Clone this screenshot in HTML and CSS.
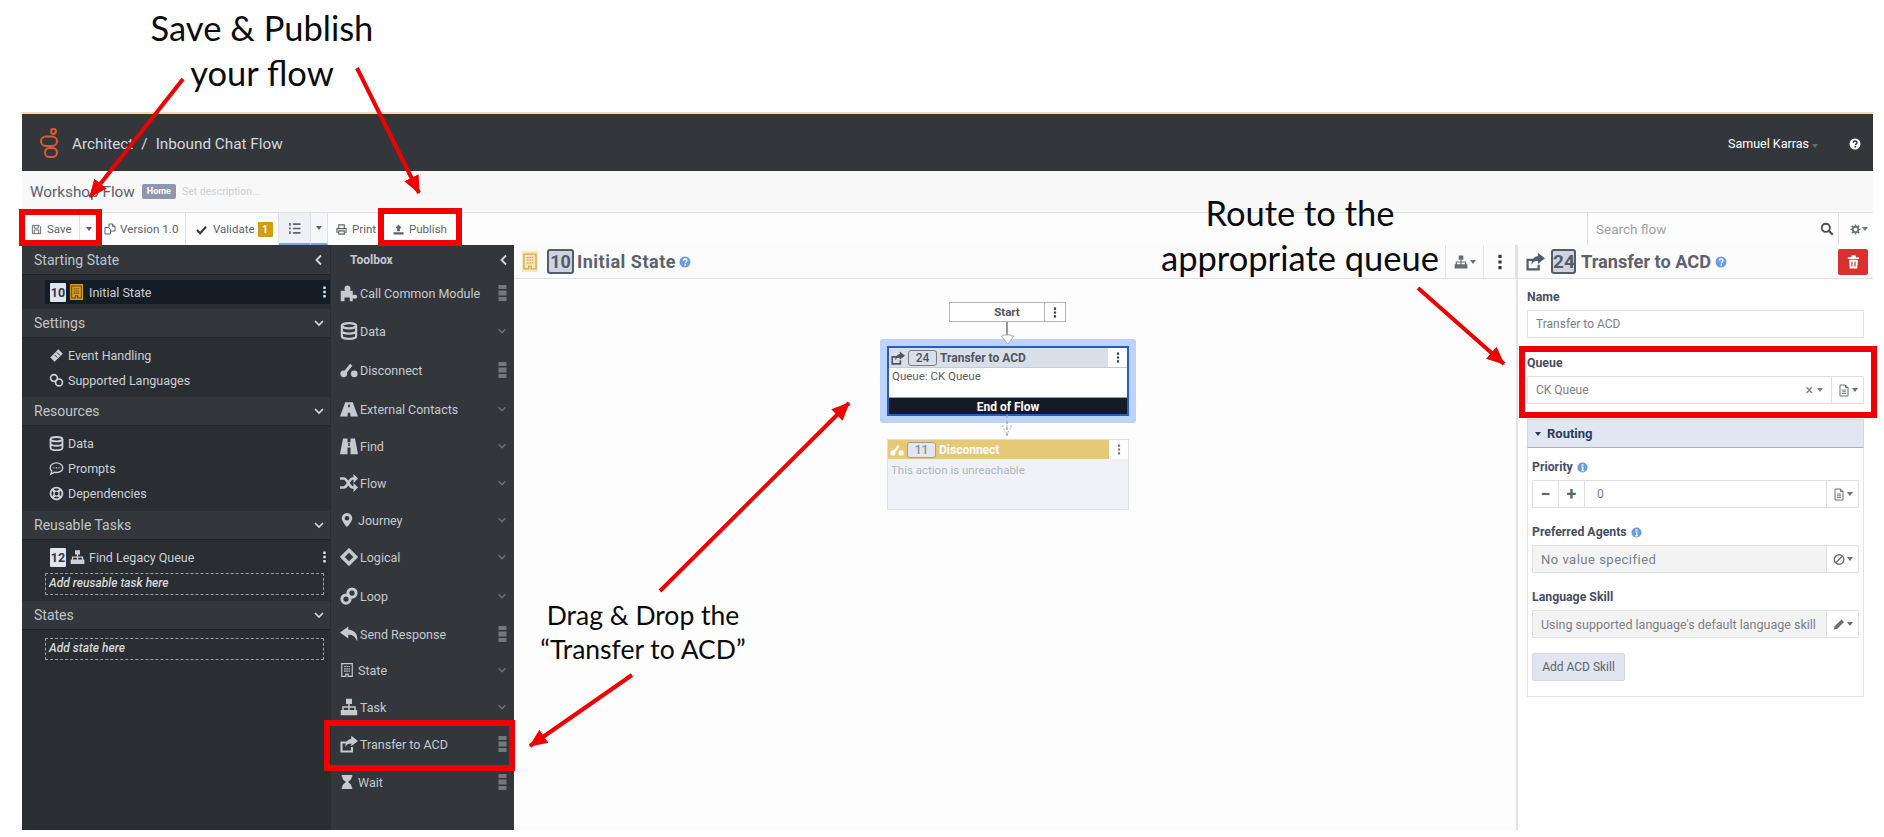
FILE: index.html
```html
<!DOCTYPE html>
<html lang="en">
<head>
    <meta charset="UTF-8">
    <meta name="viewport" content="width=device-width, initial-scale=1.0">
    <title>Architect - Inbound Chat Flow</title>
    <link rel="stylesheet" href="styles.css">
</head>
<body>

<svg class="defs" width="0" height="0">
    <defs>
        <symbol id="i-save" viewBox="0 0 24 24"><path d="M3 3h15l3 3v15H3z M7 3v6h9V3 M7 21v-8h10v8" fill="none" stroke="currentColor" stroke-width="2"/></symbol>
        <symbol id="i-copy" viewBox="0 0 24 24"><path d="M2 9h7l4 4v9H2z M10 9V2h7l5 5v9h-9 M17 2v5h5" fill="none" stroke="currentColor" stroke-width="2"/></symbol>
        <symbol id="i-check" viewBox="0 0 24 24"><path d="M2 13l7 7L22 6" fill="none" stroke="currentColor" stroke-width="4.5"/></symbol>
        <symbol id="i-list" viewBox="0 0 24 24"><path d="M9 4h14M9 12h14M9 20h14" fill="none" stroke="currentColor" stroke-width="3.2"/><path d="M2 2h3v5H2zM2 10h3v4H2zM2 17h3v5H2z" fill="currentColor"/></symbol>
        <symbol id="i-print" viewBox="0 0 24 24"><path d="M6 9V2h12v7 M6 18H2v-8h20v8h-4 M6 15h12v7H6z" fill="none" stroke="currentColor" stroke-width="2.4"/></symbol>
        <symbol id="i-upload" viewBox="0 0 24 24"><path d="M12 1l7 8h-4v7H9V9H5z M1 18h22v5H1z" fill="currentColor"/></symbol>
        <symbol id="i-search" viewBox="0 0 24 24"><circle cx="10" cy="10" r="7" fill="none" stroke="currentColor" stroke-width="3.2"/><path d="M15 15l7 7" stroke="currentColor" stroke-width="3.6"/></symbol>
        <symbol id="i-gear" viewBox="0 0 24 24"><circle cx="12" cy="12" r="6" fill="none" stroke="currentColor" stroke-width="4"/><path d="M12 1v5M12 18v5M1 12h5M18 12h5M4 4l4 4M16 16l4 4M20 4l-4 4M8 16l-4 4" stroke="currentColor" stroke-width="3.4"/></symbol>
        <symbol id="i-building" viewBox="0 0 24 24"><path d="M3 1h18v22h-7v-4h-4v4H3z" fill="none" stroke="currentColor" stroke-width="2"/><path d="M7 5h3v2H7zM11 5h3v2h-3zM15 5h2v2h-2zM7 9h3v2H7zM11 9h3v2h-3zM15 9h2v2h-2zM7 13h3v2H7zM11 13h3v2h-3zM15 13h2v2h-2z" fill="currentColor"/></symbol>
        <symbol id="i-puzzle" viewBox="0 0 24 24"><path d="M1 23V9h6c-2-2-1-7 3-7s5 5 3 7h4v6c2-1 6-1 6 2s-4 3-6 2v4h-4v-5H6v5z" fill="currentColor"/></symbol>
        <symbol id="i-data" viewBox="0 0 24 24"><ellipse cx="12" cy="5" rx="9.500" ry="3.500" fill="none" stroke="currentColor" stroke-width="3"/><path d="M2.500 5v14c0 2 4 3.500 9.500 3.500s9.500-1.500 9.500-3.500V5 M2.500 12c0 2 4 3.500 9.500 3.500s9.500-1.500 9.500-3.500" fill="none" stroke="currentColor" stroke-width="3"/></symbol>
        <symbol id="i-disconnect" viewBox="0 0 24 24"><circle cx="5" cy="17" r="4.500" fill="currentColor"/><circle cx="19" cy="17" r="4.500" fill="currentColor"/><path d="M6 16L15 5" stroke="currentColor" stroke-width="4"/></symbol>
        <symbol id="i-road" viewBox="0 0 24 24"><path d="M7 3h10l7 19H14l-.5-5h-3L10 22H0z" fill="currentColor"/><path d="M11 6h2l.3 3.500h-2.600z" fill="#33373c"/></symbol>
        <symbol id="i-find" viewBox="0 0 24 24"><path d="M4 2h6v5h4V2h6l4 21H14v-9h-4v9H0z" fill="currentColor"/><path d="M11 8h2v4h-2z" fill="#33373c"/></symbol>
        <symbol id="i-random" viewBox="0 0 24 24"><path d="M0 6h5c5 0 7 12 12 12h3 M0 18h5c5 0 7-12 12-12h3" fill="none" stroke="currentColor" stroke-width="3.600"/><path d="M18 0l6 6-6 6zM18 12l6 6-6 6z" fill="currentColor"/></symbol>
        <symbol id="i-marker" viewBox="0 0 24 24"><path fill-rule="evenodd" d="M12 0a9 9 0 0 1 9 9c0 6-9 15-9 15S3 15 3 9a9 9 0 0 1 9-9zm0 5a4 4 0 1 0 0 8 4 4 0 0 0 0-8z" fill="currentColor"/></symbol>
        <symbol id="i-diamond" viewBox="0 0 24 24"><path d="M12 3l9 9-9 9-9-9z" fill="none" stroke="currentColor" stroke-width="4.500"/></symbol>
        <symbol id="i-link" viewBox="0 0 24 24"><circle cx="8" cy="16" r="5.500" fill="none" stroke="currentColor" stroke-width="4"/><circle cx="16" cy="8" r="5.500" fill="none" stroke="currentColor" stroke-width="4"/></symbol>
        <symbol id="i-reply" viewBox="0 0 24 24"><path d="M11 2L0 10l11 8v-5c6 0 9 2 12 9 1-10-3-15-12-16z" fill="currentColor"/></symbol>
        <symbol id="i-sitemap" viewBox="0 0 24 24"><path d="M8 1h8v7h-3v3h8v5h2v7h-7v-7h3v-3h-6v3h3v7H8v-7h3v-3H5v3h3v7H1v-7h2v-5h8V8H8z" fill="currentColor"/></symbol>
        <symbol id="i-share" viewBox="0 0 24 24"><path d="M15 10H2v12h14v-6" fill="none" stroke="currentColor" stroke-width="2.800"/><path d="M15 1l9 7-9 7v-4c-3 0-6 1-8 5 0-6 3-10 8-11z" fill="currentColor"/></symbol>
        <symbol id="i-hourglass" viewBox="0 0 24 24"><path d="M3 0h18v3h-1c0 6-5 7-6 9 1 2 6 3 6 9h1v3H3v-3h1c0-6 5-7 6-9-1-2-6-3-6-9H3z" fill="currentColor"/></symbol>
        <symbol id="i-ticket" viewBox="0 0 24 24"><path d="M15 2l7 7-13 13-7-7z" fill="currentColor"/><path d="M12.500 7l5 5M9 11l4 4" stroke="#2a2e33" stroke-width="1.500"/></symbol>
        <symbol id="i-language" viewBox="0 0 24 24"><circle cx="8" cy="8" r="5.500" fill="none" stroke="currentColor" stroke-width="2.600"/><circle cx="16" cy="15" r="5.500" fill="none" stroke="currentColor" stroke-width="2.600"/></symbol>
        <symbol id="i-comment" viewBox="0 0 24 24"><path d="M12 3C6 3 2 6.500 2 11c0 2 1 4 2.500 5L3 21l6-3c1 .2 2 .3 3 .3 6 0 10-3.300 10-7.300S18 3 12 3z" fill="none" stroke="currentColor" stroke-width="2.200"/><path d="M7 10h2v2H7zM11 10h2v2h-2zM15 10h2v2h-2z" fill="currentColor"/></symbol>
        <symbol id="i-lifering" viewBox="0 0 24 24"><circle cx="12" cy="12" r="9.500" fill="none" stroke="currentColor" stroke-width="3"/><circle cx="12" cy="12" r="4" fill="none" stroke="currentColor" stroke-width="2"/><path d="M5 5l4 4M19 5l-4 4M5 19l4-4M19 19l-4-4" stroke="currentColor" stroke-width="4"/></symbol>
        <symbol id="i-trash" viewBox="0 0 24 24"><path d="M9 2h6l1 3h5v3H3V5h5zM5 9h14l-1 14H6z" fill="currentColor"/><path d="M9.500 12v8M14.500 12v8" stroke="#d9312f" stroke-width="1.800"/></symbol>
        <symbol id="i-file" viewBox="0 0 24 24"><path d="M4 1h11l5 5v17H4z M15 1v5h5" fill="none" stroke="currentColor" stroke-width="2"/><path d="M8 11h8M8 14.500h8M8 18h8" stroke="currentColor" stroke-width="1.800"/></symbol>
        <symbol id="i-ban" viewBox="0 0 24 24"><circle cx="12" cy="12" r="9.500" fill="none" stroke="currentColor" stroke-width="2.800"/><path d="M5 19L19 5" stroke="currentColor" stroke-width="2.800"/></symbol>
        <symbol id="i-pencil" viewBox="0 0 24 24"><path d="M17 2l5 5L8 21l-6 1 1-6z" fill="currentColor"/></symbol>
        <symbol id="i-info" viewBox="0 0 24 24"><circle cx="12" cy="12" r="11" fill="currentColor"/><path d="M10 5h4v3h-4zM9.500 10H14v8h1.500v2h-6v-2H11v-6H9.500z" fill="#fff"/></symbol>
        <symbol id="i-help" viewBox="0 0 24 24"><circle cx="12" cy="12" r="11" fill="currentColor"/><path d="M8.500 9.500C8.500 7.500 10 6 12 6s3.800 1.300 3.800 3.300c0 2.700-3 2.700-3 5" fill="none" stroke="var(--help-mark, #fff)" stroke-width="2.800"/><path d="M11 16h3v3h-3z" fill="var(--help-mark, #fff)"/></symbol>
        <symbol id="i-down" viewBox="0 0 24 24"><path d="M4 8l8 8 8-8" fill="none" stroke="currentColor" stroke-width="3.400"/></symbol>
        <symbol id="i-left" viewBox="0 0 24 24"><path d="M16 3l-9 9 9 9" fill="none" stroke="currentColor" stroke-width="3.600"/></symbol>
        <symbol id="i-grip" viewBox="0 0 10 20"><path d="M0 0h10v5H0zM0 7h10v6H0zM0 15h10v5H0z" fill="currentColor"/></symbol>
        <symbol id="i-kebab" viewBox="0 0 6 20"><path d="M1 1h4v4H1zM1 8h4v4H1zM1 15h4v4H1z" fill="currentColor"/></symbol>
    </defs>
</svg>

<div class="page">

    <div class="app">
        <header class="app-header">
            <svg class="logo" viewBox="0 0 18 30">
                <circle cx="13.500" cy="3.500" r="2.400"/>
                <rect x="1" y="8.500" width="16" height="9.500" rx="4.700"/>
                <rect x="5" y="20" width="12" height="9" rx="4.500"/>
            </svg>
            <span class="crumb">Architect</span>
            <span class="crumb crumb-sep">/</span>
            <span class="crumb">Inbound Chat Flow</span>
            <span class="user">Samuel Karras<i class="caret caret-dim"></i></span>
            <svg class="help-top"><use href="#i-help"/></svg>
        </header>

        <div class="flow-title">
            <span class="flow-name">Workshop Flow</span>
            <span class="home-badge">Home</span>
            <span class="flow-desc">Set description...</span>
        </div>

        <div class="toolbar">
            <div class="tb tb-save"><svg class="ic"><use href="#i-save"/></svg>Save</div>
            <div class="tb tb-caret"><i class="caret"></i></div>
            <div class="tb tb-version"><svg class="ic ic-copy"><use href="#i-copy"/></svg>Version 1.0</div>
            <div class="tb tb-validate"><svg class="ic ic-check"><use href="#i-check"/></svg>Validate<span class="count">1</span></div>
            <div class="tb tb-list"><svg class="ic"><use href="#i-list"/></svg></div>
            <div class="tb tb-caret tb-list-caret"><i class="caret"></i></div>
            <div class="tb tb-print"><svg class="ic"><use href="#i-print"/></svg>Print</div>
            <div class="tb tb-publish"><svg class="ic"><use href="#i-upload"/></svg>Publish</div>
            <div class="tb-search">
                <span>Search flow</span>
                <svg class="ic-search"><use href="#i-search"/></svg>
            </div>
            <div class="tb-gear"><svg class="ic"><use href="#i-gear"/></svg><i class="caret"></i></div>
        </div>

        <div class="workspace">
            <aside class="outline">
                <div class="sec-head sec-first">Starting State<svg class="chev"><use href="#i-left"/></svg></div>
                <div class="sec-body body-start">
                    <div class="task selected">
                        <span class="num">10</span>
                        <svg class="task-ic task-amber"><use href="#i-building"/></svg>
                        <span>Initial State</span>
                        <svg class="kebab"><use href="#i-kebab"/></svg>
                    </div>
                </div>

                <div class="sec-head">Settings<svg class="chev"><use href="#i-down"/></svg></div>
                <div class="sec-body body-settings">
                    <div class="link"><svg class="link-ic"><use href="#i-ticket"/></svg>Event Handling</div>
                    <div class="link"><svg class="link-ic"><use href="#i-language"/></svg>Supported Languages</div>
                </div>

                <div class="sec-head">Resources<svg class="chev"><use href="#i-down"/></svg></div>
                <div class="sec-body body-resources">
                    <div class="link"><svg class="link-ic"><use href="#i-data"/></svg>Data</div>
                    <div class="link"><svg class="link-ic"><use href="#i-comment"/></svg>Prompts</div>
                    <div class="link"><svg class="link-ic"><use href="#i-lifering"/></svg>Dependencies</div>
                </div>

                <div class="sec-head">Reusable Tasks<svg class="chev"><use href="#i-down"/></svg></div>
                <div class="sec-body body-tasks">
                    <div class="task">
                        <span class="num">12</span>
                        <svg class="task-ic"><use href="#i-sitemap"/></svg>
                        <span>Find Legacy Queue</span>
                        <svg class="kebab"><use href="#i-kebab"/></svg>
                    </div>
                    <div class="drop">Add reusable task here</div>
                </div>

                <div class="sec-head">States<svg class="chev"><use href="#i-down"/></svg></div>
                <div class="sec-body body-states">
                    <div class="drop">Add state here</div>
                </div>
            </aside>

            <aside class="toolbox">
                <div class="toolbox-head">Toolbox<svg class="chev"><use href="#i-left"/></svg></div>
                <div class="tool"><svg class="tool-ic"><use href="#i-puzzle"/></svg>Call Common Module<svg class="grip"><use href="#i-grip"/></svg></div>
                <div class="tool"><svg class="tool-ic"><use href="#i-data"/></svg>Data<svg class="more"><use href="#i-down"/></svg></div>
                <div class="tool tool-l"><svg class="tool-ic"><use href="#i-disconnect"/></svg>Disconnect<svg class="grip"><use href="#i-grip"/></svg></div>
                <div class="tool"><svg class="tool-ic"><use href="#i-road"/></svg>External Contacts<svg class="more"><use href="#i-down"/></svg></div>
                <div class="tool tool-s"><svg class="tool-ic"><use href="#i-find"/></svg>Find<svg class="more"><use href="#i-down"/></svg></div>
                <div class="tool"><svg class="tool-ic"><use href="#i-random"/></svg>Flow<svg class="more"><use href="#i-down"/></svg></div>
                <div class="tool tool-s"><svg class="tool-ic ic-narrow"><use href="#i-marker"/></svg>Journey<svg class="more"><use href="#i-down"/></svg></div>
                <div class="tool"><svg class="tool-ic"><use href="#i-diamond"/></svg>Logical<svg class="more"><use href="#i-down"/></svg></div>
                <div class="tool tool-l"><svg class="tool-ic"><use href="#i-link"/></svg>Loop<svg class="more"><use href="#i-down"/></svg></div>
                <div class="tool tool-s"><svg class="tool-ic"><use href="#i-reply"/></svg>Send Response<svg class="grip"><use href="#i-grip"/></svg></div>
                <div class="tool tool-s"><svg class="tool-ic ic-narrow"><use href="#i-building"/></svg>State<svg class="more"><use href="#i-down"/></svg></div>
                <div class="tool"><svg class="tool-ic"><use href="#i-sitemap"/></svg>Task<svg class="more"><use href="#i-down"/></svg></div>
                <div class="tool tool-s"><svg class="tool-ic"><use href="#i-share"/></svg>Transfer to ACD<svg class="grip"><use href="#i-grip"/></svg></div>
                <div class="tool tool-l"><svg class="tool-ic ic-narrow"><use href="#i-hourglass"/></svg>Wait<svg class="grip"><use href="#i-grip"/></svg></div>
            </aside>

            <main class="canvas">
                <div class="panel-head canvas-head">
                    <svg class="head-ic head-amber"><use href="#i-building"/></svg>
                    <span class="head-num">10</span>
                    <span class="head-title">Initial State</span>
                    <svg class="head-help"><use href="#i-help"/></svg>
                    <div class="canvas-tools">
                        <div class="canvas-tool tool-org"><svg><use href="#i-sitemap"/></svg><i class="caret"></i></div>
                        <div class="canvas-tool tool-menu"><svg class="canvas-kebab"><use href="#i-kebab"/></svg></div>
                    </div>
                </div>

                <div class="diagram">
                    <div class="node-start">
                        <span class="start-label">Start</span>
                        <span class="start-menu"><svg><use href="#i-kebab"/></svg></span>
                    </div>

                    <div class="node-glow">
                        <div class="node node-active">
                            <div class="node-title">
                                <svg class="node-ic"><use href="#i-share"/></svg>
                                <span class="node-num">24</span>
                                <span class="node-name">Transfer to ACD</span>
                                <span class="node-menu"><svg><use href="#i-kebab"/></svg></span>
                            </div>
                            <div class="node-body">Queue: CK Queue</div>
                            <div class="node-foot">End of Flow</div>
                        </div>
                    </div>

                    <div class="node node-off">
                        <div class="node-title">
                            <svg class="node-ic"><use href="#i-disconnect"/></svg>
                            <span class="node-num">11</span>
                            <span class="node-name">Disconnect</span>
                            <span class="node-menu"><svg><use href="#i-kebab"/></svg></span>
                        </div>
                        <div class="node-body">This action is unreachable</div>
                    </div>

                    <svg class="wires" viewBox="0 0 1002 550">
                        <path d="M493 43v13" stroke="#777" stroke-width="1.500"/>
                        <path d="M489 56h8v1h3l-6 8h-0.500l-6-8h1z" fill="#fff" stroke="#aaa"/>
                        <path d="M493 136v24" stroke="#aaa" stroke-width="1.500" stroke-dasharray="3 3" fill="none"/>
                        <path d="M488 147h10l-5 8z" fill="none" stroke="#bbb" stroke-dasharray="2 2"/>
                    </svg>
                </div>
            </main>

            <aside class="props">
                <div class="panel-head props-head">
                    <svg class="head-ic"><use href="#i-share"/></svg>
                    <span class="head-num">24</span>
                    <span class="head-title">Transfer to ACD</span>
                    <svg class="head-help"><use href="#i-help"/></svg>
                    <div class="del-btn"><svg><use href="#i-trash"/></svg></div>
                </div>

                <div class="props-form">
                    <label class="lbl lbl-first">Name</label>
                    <div class="input"><span class="input-text">Transfer to ACD</span></div>

                    <label class="lbl">Queue</label>
                    <div class="input">
                        <span class="input-text">CK Queue</span>
                        <span class="clear">×</span><i class="caret caret-clear"></i>
                        <span class="addon"><svg><use href="#i-file"/></svg><i class="caret"></i></span>
                    </div>

                    <div class="routing-head"><i class="caret"></i>Routing</div>
                    <div class="routing-body">
                        <label class="lbl lbl-first">Priority<svg class="info"><use href="#i-info"/></svg></label>
                        <div class="input">
                            <span class="step">&minus;</span>
                            <span class="step">+</span>
                            <span class="input-text">0</span>
                            <span class="addon"><svg><use href="#i-file"/></svg><i class="caret"></i></span>
                        </div>

                        <label class="lbl">Preferred Agents<svg class="info"><use href="#i-info"/></svg></label>
                        <div class="input input-off">
                            <span class="input-text input-none">No value specified</span>
                            <span class="addon"><svg><use href="#i-ban"/></svg><i class="caret"></i></span>
                        </div>

                        <label class="lbl">Language Skill</label>
                        <div class="input input-off">
                            <span class="input-text input-skill">Using supported language's default language skill</span>
                            <span class="addon"><svg><use href="#i-pencil"/></svg><i class="caret"></i></span>
                        </div>

                        <button class="add-skill">Add ACD Skill</button>
                    </div>
                </div>
            </aside>
        </div>
    </div>

    <!-- slide annotations drawn over the screenshot -->
    <div class="note note-save">Save &amp; Publish<br>your flow</div>
    <div class="note note-route">Route to the<br>appropriate queue</div>
    <div class="note note-drag">Drag &amp; Drop the<br>&ldquo;Transfer to ACD&rdquo;</div>

    <div class="mark mark-save"></div>
    <div class="mark mark-publish"></div>
    <div class="mark mark-queue"></div>
    <div class="mark mark-tool"></div>

    <svg class="arrows" viewBox="0 0 1884 837">
        <defs>
            <marker id="head" markerUnits="userSpaceOnUse" markerWidth="18" markerHeight="16" refX="17" refY="8" orient="auto-start-reverse">
                <path d="M0 0L18 8L0 16z" fill="#f00000"/>
            </marker>
        </defs>
        <line x1="183" y1="79" x2="90" y2="197" marker-end="url(#head)"/>
        <line x1="357" y1="68" x2="419" y2="193" marker-end="url(#head)"/>
        <line x1="1418" y1="288" x2="1504" y2="364" marker-end="url(#head)"/>
        <line x1="660" y1="591" x2="849" y2="403" marker-end="url(#head)"/>
        <line x1="632" y1="675" x2="530" y2="746" marker-end="url(#head)"/>
    </svg>
</div>

</body>
</html>
```

FILE: styles.css
```css
body {
    margin: 0;
    background: white;
    font-family: Roboto, Arial, sans-serif;
    font-size: 12px;
    color: #555c66;
}

.defs {
    position: absolute;
}

.page {
    position: relative;
    width: 1884px;
    height: 837px;
    padding-top: 112px;
    box-sizing: border-box;
    overflow: hidden;
}

.app {
    display: flex;
    flex-direction: column;
    width: 1851px;
    height: 716px;
    margin-left: 22px;
    border-top: 2px solid #f6d9a9;
}

.caret {
    display: inline-block;
    width: 0;
    height: 0;
    border-left: 3.5px solid transparent;
    border-right: 3.5px solid transparent;
    border-top: 4px solid currentColor;
}

.caret-dim {
    color: #666b71;
    margin-left: 3px;
}

/* header */
.app-header {
    display: flex;
    align-items: center;
    height: 57px;
    flex-shrink: 0;
    background: #33373c;
    color: #d5d8dc;
}

.logo {
    width: 18px;
    height: 30px;
    margin: 0 14px 0 18px;
    fill: none;
    stroke: #df5a32;
    stroke-width: 2;
}

.crumb {
    padding-top: 2px;
    font-size: 15.3px;
}

.crumb-sep {
    margin: 0 8px;
}

.user {
    margin-left: auto;
    padding-top: 2px;
    color: white;
    font-size: 12.5px;
}

.help-top {
    width: 12px;
    height: 12px;
    margin: 2px 12px 0 31px;
    color: white;
    --help-mark: #33373c;
}

/* title row */
.flow-title {
    display: flex;
    align-items: center;
    height: 41px;
    flex-shrink: 0;
    padding-left: 8px;
    background: #f8f8f9;
    box-sizing: border-box;
}

.flow-name {
    font-size: 15.3px;
    color: #5b6270;
}

.home-badge {
    margin-left: 7px;
    padding: 1px 5px;
    border-radius: 2px;
    background: #8d97b0;
    color: white;
    font-size: 9px;
    font-weight: bold;
    line-height: 13px;
}

.flow-desc {
    margin-left: 6px;
    font-size: 10.5px;
    color: #ccd0d6;
}

/* toolbar */
.toolbar {
    display: flex;
    height: 33px;
    flex-shrink: 0;
    background: #fdfdfd;
    border-top: 1px solid #dfe1e4;
    box-sizing: border-box;
    font-size: 11.5px;
    color: #5d6470;
}

.tb {
    display: flex;
    align-items: center;
    box-sizing: border-box;
}

.ic {
    width: 11px;
    height: 11px;
    flex-shrink: 0;
    margin-right: 5px;
}

.tb-save {
    width: 57px;
    padding-left: 9px;
}

.tb-caret {
    justify-content: center;
    width: 18px;
    border-left: 1px solid #dfe1e4;
}

.tb-version {
    width: 89px;
    padding-left: 7px;
    border-right: 1px solid #dfe1e4;
    font-size: 11.7px;
}

.tb-version .ic-copy {
    width: 12px;
    height: 12px;
    margin-right: 4px;
}

.tb-validate {
    width: 93px;
    padding-left: 10px;
    border-right: 1px solid #dfe1e4;
}

.tb-validate .ic-check {
    margin-right: 6px;
    color: #33373c;
}

.count {
    display: inline-block;
    width: 15px;
    margin-left: 3px;
    border-radius: 1px;
    background: #d59c0f;
    color: white;
    font-size: 10px;
    font-weight: bold;
    line-height: 15px;
    text-align: center;
}

.tb-list {
    justify-content: center;
    width: 31px;
    background: #eef0f5;
    border-bottom: 2px solid #76a3ea;
}

.tb-list .ic {
    width: 13px;
    height: 13px;
    margin: 0;
}

.tb-list-caret {
    background: #f6f7f9;
    border-bottom: 2px solid #76a3ea;
    border-right: 1px solid #dfe1e4;
}

.tb-print {
    width: 50px;
    padding-left: 8px;
}

.tb-publish {
    width: 84px;
    padding-left: 15px;
}

.tb-search {
    display: flex;
    align-items: center;
    justify-content: space-between;
    width: 251px;
    margin-left: auto;
    padding: 0 4px 0 8px;
    border-left: 1px solid #dfe1e4;
    box-sizing: border-box;
    font-size: 13.5px;
    color: #9ea2a8;
}

.ic-search {
    width: 14px;
    height: 14px;
    color: #4a4f55;
}

.tb-gear {
    display: flex;
    align-items: center;
    width: 35px;
    padding-left: 11px;
    border-left: 1px solid #dfe1e4;
    box-sizing: border-box;
    color: #70757b;
}

.tb-gear .ic {
    margin-right: 1px;
}

.workspace {
    display: flex;
    flex: 1;
    min-height: 0;
}

/* left outline */
.outline {
    width: 308px;
    flex-shrink: 0;
    background: #2a2e33;
    color: #ccd0d5;
}

.sec-head {
    display: flex;
    align-items: center;
    justify-content: space-between;
    height: 29px;
    padding: 0 5px 0 12px;
    background: #33373c;
    border-bottom: 1px solid #212429;
    box-sizing: border-box;
    font-size: 14px;
    color: #bfc3c8;
}

.sec-first {
    height: 30px;
}

.chev {
    width: 12px;
    height: 12px;
    color: #d5d8dc;
}

.sec-body {
    box-sizing: border-box;
}

.body-start {
    padding: 5px 0 5px 23px;
}

.body-settings {
    padding: 5px 0 4px 27px;
}

.body-resources {
    padding: 5px 0 5px 27px;
}

.body-tasks {
    padding: 6px 6px 6px 23px;
}

.body-states {
    padding: 8px 6px 0 23px;
}

.link {
    display: flex;
    align-items: center;
    height: 25px;
    font-size: 12.5px;
}

.link-ic {
    width: 15px;
    height: 15px;
    margin-right: 4px;
}

.task {
    display: flex;
    align-items: center;
    height: 22px;
    margin-right: -6px;
    padding-left: 5px;
    font-size: 12.5px;
}

.body-start .task {
    height: 24px;
    margin-right: 0;
}

.task.selected {
    background: #141c26;
}

.num {
    width: 16px;
    height: 19px;
    margin-right: 4px;
    border-radius: 1px;
    background: #dfe4ee;
    color: #33373c;
    font-size: 12.5px;
    font-weight: bold;
    line-height: 19px;
    text-align: center;
}

.task-ic {
    width: 15px;
    height: 16px;
    margin-right: 4px;
}

.task-amber {
    width: 13px;
    margin-right: 6px;
    background: #d59c20;
    color: #6b4d10;
}

.kebab {
    width: 5px;
    height: 12px;
    margin-left: auto;
    margin-right: 3px;
    color: #e3e5e8;
}

.drop {
    height: 22px;
    margin-top: 5px;
    padding-left: 3px;
    border: 1px dashed #9a9ea3;
    box-sizing: border-box;
    font-size: 12px;
    font-style: italic;
    font-weight: 500;
    line-height: 19px;
    color: #d5d8dc;
}

.body-states .drop {
    margin-top: 0;
}

/* toolbox */
.toolbox {
    width: 184px;
    flex-shrink: 0;
    background: #33373c;
    border-left: 1px solid #2a2e33;
    box-sizing: border-box;
    color: #c6cace;
    font-size: 12.5px;
}

.toolbox-head {
    display: flex;
    align-items: center;
    justify-content: space-between;
    height: 29px;
    padding: 0 4px 0 19px;
    font-size: 12px;
    font-weight: bold;
    color: #c6cace;
}

.tool {
    display: flex;
    align-items: center;
    height: 38px;
    padding: 0 7px 0 9px;
}

.tool-s {
    height: 36px;
}

.tool-l {
    height: 40px;
}

.tool-ic {
    width: 18px;
    height: 18px;
    flex-shrink: 0;
    margin-right: 2px;
}

.ic-narrow {
    width: 14px;
    margin-right: 4px;
}

.grip {
    width: 9px;
    height: 16px;
    margin-left: auto;
    color: #74787d;
}

.more {
    width: 10px;
    height: 10px;
    margin-left: auto;
    color: #6d7177;
}

/* canvas and property panel heads */
.panel-head {
    display: flex;
    align-items: center;
    height: 34px;
    flex-shrink: 0;
    background: #fbfbfb;
    border-bottom: 1px solid #e1e3e6;
    box-sizing: border-box;
}

.head-ic {
    flex-shrink: 0;
}

.head-num {
    border: 2px solid #555c66;
    border-radius: 3px;
    background: #cdd3e0;
    box-sizing: border-box;
    font-weight: bold;
    text-align: center;
}

.head-title {
    font-weight: bold;
    color: #5b6270;
}

.head-help {
    width: 12px;
    height: 12px;
    color: #6b9be0;
}

.canvas {
    display: flex;
    flex-direction: column;
    flex: 1;
    min-width: 0;
    background: #fdfdfd;
}

.canvas-head {
    padding-left: 8px;
}

.canvas-head .head-ic {
    width: 16px;
    height: 21px;
    margin-right: 9px;
}

.head-amber {
    background: #f5e6c4;
    color: #d9a94a;
}

.canvas-head .head-num {
    width: 27px;
    height: 25px;
    margin-right: 3px;
    font-size: 18px;
    line-height: 21px;
}

.canvas-head .head-title {
    font-size: 18px;
    letter-spacing: 0.5px;
}

.canvas-head .head-help {
    margin-left: 3px;
}

.canvas-tools {
    display: flex;
    align-items: center;
    height: 100%;
    margin-left: auto;
}

.canvas-tool {
    display: flex;
    align-items: center;
    justify-content: center;
    height: 100%;
    border-left: 1px solid #e1e3e6;
    box-sizing: border-box;
}

.tool-org {
    width: 38px;
    gap: 2px;
    color: #696e75;
}

.tool-menu {
    width: 33px;
    border-right: 1px solid #e1e3e6;
}

.tool-org svg {
    width: 14px;
    height: 14px;
}

.canvas-kebab {
    width: 6px;
    height: 16px;
    color: #33373c;
}

/* diagram */
.diagram {
    position: relative;
    flex: 1;
}

.wires {
    position: absolute;
    left: 0;
    top: 0;
    width: 1002px;
    height: 550px;
    pointer-events: none;
}

.node-start {
    position: absolute;
    left: 435px;
    top: 23px;
    display: flex;
    width: 117px;
    height: 20px;
    border: 1px solid #b5b9bf;
    background: white;
    box-sizing: border-box;
    font-weight: bold;
    font-size: 11.5px;
    color: #4e5560;
    line-height: 18px;
}

.start-label {
    flex: 1;
    text-align: center;
    padding-left: 20px;
}

.start-menu {
    display: flex;
    align-items: center;
    justify-content: center;
    width: 20px;
    border-left: 1px solid #b5b9bf;
}

.start-menu svg,
.node-menu svg {
    width: 4px;
    height: 11px;
    color: #33373c;
}

.node-glow {
    position: absolute;
    left: 366px;
    top: 60px;
    width: 256px;
    height: 84px;
    padding: 7px;
    border-radius: 3px;
    background: #bcd3fb;
    box-sizing: border-box;
}

.node {
    width: 242px;
    box-sizing: border-box;
    font-size: 11.5px;
}

.node-title {
    display: flex;
    align-items: center;
    height: 19px;
    font-weight: bold;
    color: #4e5560;
    font-size: 12px;
}

.node-ic {
    width: 14px;
    height: 14px;
    margin: 0 3px 0 2px;
    flex-shrink: 0;
}

.node-num {
    width: 29px;
    height: 16px;
    margin-right: 3px;
    border: 1px solid #777c84;
    border-radius: 3px;
    box-sizing: border-box;
    font-weight: 500;
    line-height: 14px;
    text-align: center;
}

.node-menu {
    display: flex;
    align-items: center;
    justify-content: center;
    width: 19px;
    height: 100%;
    margin-left: auto;
    background: white;
}

.node-body {
    padding: 1px 3px 0;
    font-size: 11.5px;
}

.node-active {
    height: 70px;
    border: 2px solid #2a5cbb;
    background: white;
}

.node-active .node-title {
    background: #d9dfe8;
}

.node-active .node-body {
    height: 31px;
    box-sizing: border-box;
    border-top: 1px solid #c6ccd4;
    border-bottom: 1px solid #9aa0a8;
}

.node-foot {
    height: 16px;
    padding-top: 1px;
    background: #151b26;
    box-sizing: border-box;
    color: white;
    font-size: 12px;
    font-weight: bold;
    line-height: 16px;
    text-align: center;
}

.node-off {
    position: absolute;
    left: 373px;
    top: 160px;
    height: 71px;
    border: 1px solid #dcdfe5;
    background: #eff1f6;
    color: #b3b7bd;
}

.node-off .node-title {
    background: #e6c879;
    color: white;
}

.node-off .node-num {
    border-color: #9aa0a8;
    background: #e3e6ec;
    color: #8b9098;
}

.node-off .node-menu svg {
    color: #777;
}

.node-off .node-body {
    padding-top: 4px;
}

/* right panel */
.props {
    width: 357px;
    flex-shrink: 0;
    background: white;
    border-left: 2px solid #e1e3e6;
    box-sizing: border-box;
}

.props-head {
    padding-left: 8px;
}

.props-head .head-ic {
    width: 19px;
    height: 19px;
    margin-right: 6px;
}

.props-head .head-num {
    width: 25px;
    height: 25px;
    margin-right: 5px;
    font-size: 19px;
    line-height: 21px;
}

.props-head .head-title {
    font-size: 18.2px;
}

.props-head .head-help {
    margin-left: 4px;
}

.del-btn {
    display: flex;
    align-items: center;
    justify-content: center;
    width: 30px;
    height: 26px;
    margin: 0 5px 0 auto;
    border-radius: 2px;
    background: #d9312f;
    color: white;
}

.del-btn svg {
    width: 15px;
    height: 15px;
}

.props-form {
    padding: 0 9px;
}

.lbl {
    display: flex;
    align-items: center;
    height: 16px;
    margin: 17px 0 5px;
    font-size: 12.3px;
    font-weight: bold;
    color: #474e60;
}

.lbl-first {
    margin-top: 10px;
}

.routing-body .lbl {
    margin-top: 16px;
}

.routing-body .lbl-first {
    margin-top: 10px;
}

.input {
    display: flex;
    align-items: center;
    height: 28px;
    border: 1px solid #dfe1e4;
    border-radius: 1px;
    background: white;
    box-sizing: border-box;
    color: #7c8087;
}

.input-text {
    padding-left: 8px;
}

.input-none {
    font-size: 13px;
    letter-spacing: 0.5px;
}

.input-skill {
    font-size: 12.5px;
}

.input-off {
    background: #f3f3f3;
}

.clear {
    margin-left: auto;
    margin-right: 4px;
    font-size: 14px;
}

.caret-clear {
    margin-right: 8px;
}

.addon {
    display: flex;
    align-items: center;
    justify-content: center;
    gap: 2px;
    width: 31px;
    height: 100%;
    margin-left: auto;
    border-left: 1px solid #dfe1e4;
    background: white;
    color: #696e75;
}

.clear + .caret + .addon {
    margin-left: 0;
}

.addon svg {
    width: 12px;
    height: 13px;
}

.step {
    width: 25px;
    height: 100%;
    border-right: 1px solid #dfe1e4;
    font-size: 18px;
    font-weight: bold;
    line-height: 25px;
    text-align: center;
    color: #61666d;
}

.input-text:nth-child(3) {
    padding-left: 12px;
}

.routing-head {
    display: flex;
    align-items: center;
    height: 29px;
    margin-top: 15px;
    padding-left: 7px;
    background: #e1e6f2;
    border: 1px solid #d2d7e2;
    border-bottom: 1px solid #aab1c2;
    box-sizing: border-box;
    font-size: 13px;
    font-weight: bold;
    color: #2b3a5f;
}

.routing-head .caret {
    margin-right: 6px;
}

.routing-body {
    padding: 1px 4px 15px;
    border: 1px solid #e1e3e6;
    border-top: none;
}

.info {
    width: 11px;
    height: 11px;
    margin-left: 4px;
    color: #6b9be0;
}

.add-skill {
    display: block;
    width: 93px;
    height: 28px;
    margin-top: 15px;
    padding: 0;
    border: 1px solid #d2d7e2;
    border-radius: 2px;
    background: #e1e5ef;
    font-family: Roboto, Arial, sans-serif;
    font-size: 12px;
    color: #5b6270;
}

/* annotations */
.note {
    position: absolute;
    font-family: Lato, "Open Sans", sans-serif;
    color: #0a0a0a;
    text-align: center;
    white-space: nowrap;
}

.note-save {
    left: 112px;
    top: 5px;
    width: 300px;
    font-size: 34.5px;
    line-height: 45px;
}

.note-route {
    left: 1150px;
    top: 190px;
    width: 300px;
    font-size: 34.5px;
    line-height: 45px;
}

.note-drag {
    left: 493px;
    top: 598px;
    width: 300px;
    font-size: 26.5px;
    line-height: 34px;
}

.mark {
    position: absolute;
    border: 6px solid #f00000;
    box-sizing: border-box;
}

.mark-save {
    left: 19px;
    top: 209px;
    width: 83px;
    height: 37px;
}

.mark-publish {
    left: 378px;
    top: 208px;
    width: 84px;
    height: 38px;
}

.mark-queue {
    left: 1519px;
    top: 346px;
    width: 358px;
    height: 72px;
}

.mark-tool {
    left: 324px;
    top: 720px;
    width: 191px;
    height: 51px;
}

.arrows {
    position: absolute;
    left: 0;
    top: 0;
    width: 1884px;
    height: 837px;
    pointer-events: none;
}

.arrows line {
    stroke: #f00000;
    stroke-width: 4;
}
```
